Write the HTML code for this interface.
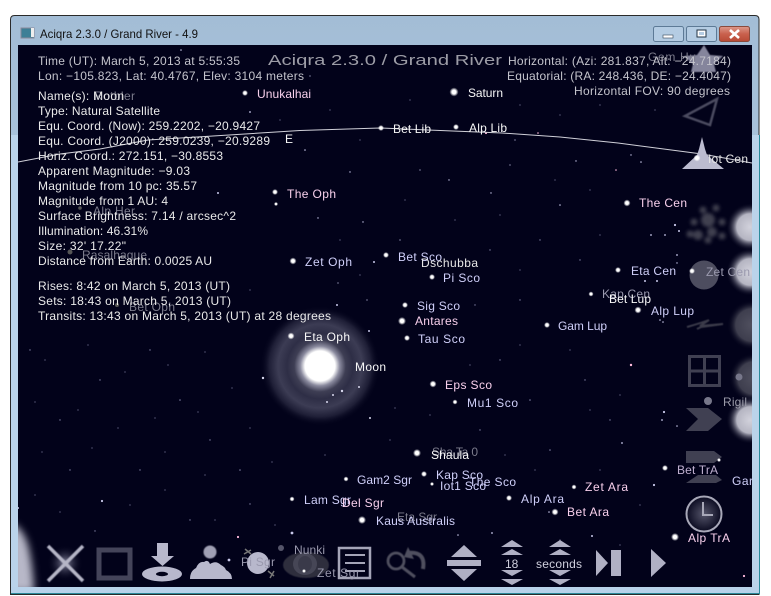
<!DOCTYPE html>
<html><head><meta charset="utf-8"><style>
html,body{margin:0;padding:0;background:#fff;width:771px;height:596px;overflow:hidden}
svg{position:absolute;left:0;top:0;display:block}
text{font-family:"Liberation Sans",sans-serif;font-size:12px;fill:#e6e6e6}
.i text{fill:#eaeaea}
.p{fill:#f8d0ec}.l{fill:#d0d0fa}.w{fill:#f8f8f8}.g{fill:#7c7c8c}.d{fill:#9a99ae}
</style></head><body>
<svg width="771" height="596" viewBox="0 0 771 596" xmlns="http://www.w3.org/2000/svg">
<defs>
<linearGradient id="tb" x1="0" y1="0" x2="0" y2="1"><stop offset="0" stop-color="#a3bdd6"/><stop offset="1" stop-color="#bad3ea"/></linearGradient>
<linearGradient id="cb" x1="0" y1="0" x2="0" y2="1"><stop offset="0" stop-color="#dd9a8c"/><stop offset=".5" stop-color="#c9604d"/><stop offset="1" stop-color="#b84a35"/></linearGradient>
<radialGradient id="halo"><stop offset="0" stop-color="#fff"/><stop offset=".25" stop-color="#fff"/><stop offset=".33" stop-color="#8a8a9e"/><stop offset=".43" stop-color="#3e3e54"/><stop offset=".55" stop-color="#2e2e46"/><stop offset=".7" stop-color="#3c3c54"/><stop offset=".85" stop-color="#1e1e36"/><stop offset="1" stop-color="#02021a" stop-opacity="0"/></radialGradient>
<radialGradient id="blob"><stop offset="0" stop-color="#d2d2dc"/><stop offset=".55" stop-color="#b5b5c2"/><stop offset="1" stop-color="#02021a" stop-opacity="0"/></radialGradient>
<radialGradient id="dblob"><stop offset="0" stop-color="#50505f"/><stop offset=".65" stop-color="#3e3e4e"/><stop offset="1" stop-color="#02021a" stop-opacity="0"/></radialGradient>
<radialGradient id="star"><stop offset="0" stop-color="#fff"/><stop offset=".45" stop-color="#fff"/><stop offset="1" stop-color="#fff" stop-opacity="0"/></radialGradient>
<radialGradient id="clk"><stop offset="0" stop-color="#55556a"/><stop offset="1" stop-color="#0a0a20"/></radialGradient>
<radialGradient id="xg"><stop offset="0" stop-color="#8888a0"/><stop offset="1" stop-color="#02021a" stop-opacity="0"/></radialGradient>
<clipPath id="sky"><rect x="18" y="45" width="734" height="542"/></clipPath>
<filter id="b1" x="-20%" y="-20%" width="140%" height="140%"><feGaussianBlur stdDeviation=".6"/></filter>
<filter id="b2" x="-30%" y="-30%" width="160%" height="160%"><feGaussianBlur stdDeviation="1.800"/></filter>
<filter id="b4" x="-60%" y="-30%" width="220%" height="160%"><feGaussianBlur stdDeviation="4"/></filter>
</defs>

<!-- window frame -->
<path d="M14.500 15.500H755q4 0 4 4V594.500H10.500V19.500q0-4 4-4z" fill="url(#tb)" stroke="#2a2a2a"/>
<rect x="11" y="135" width="7" height="452" fill="#bad3ea"/>
<rect x="752" y="135" width="7" height="452" fill="#bad3ea"/>
<rect x="11" y="587" width="748" height="6" fill="#b8d2ea"/>
<rect x="11" y="593" width="749" height="1" fill="#2a8a9a"/>
<rect x="759" y="135" width="1" height="459" fill="#2a8a9a"/>
<rect x="18" y="45" width="734" height="542" fill="#02021a"/>

<!-- title bar -->
<rect x="21" y="28" width="13" height="10" fill="#3d7f96" stroke="#889"/>
<rect x="31" y="28" width="3" height="9" fill="#eee"/>
<text x="40" y="38" style="font-size:12px;fill:#111" textLength="158" lengthAdjust="spacingAndGlyphs">Aciqra 2.3.0 / Grand River - 4.9</text>
<rect x="653.500" y="26.500" width="30" height="15" rx="2" fill="#b4cce3" stroke="#5d7a96"/>
<rect x="663" y="35" width="10" height="3" fill="#fff" stroke="#345" stroke-width=".6"/>
<rect x="686.500" y="26.500" width="30" height="15" rx="2" fill="#b4cce3" stroke="#5d7a96"/>
<rect x="697" y="30" width="9" height="7" fill="#fff" stroke="#234" stroke-width="1"/><rect x="699" y="32" width="5" height="3" fill="#b4cce3"/>
<rect x="719.500" y="26.500" width="30" height="15" rx="2" fill="url(#cb)" stroke="#8a4a3c"/>
<path d="M730 30l9 8M739 30l-9 8" stroke="#fff" stroke-width="2.600"/>

<g clip-path="url(#sky)">
<!-- faint stars -->
<g fill="#c8c8ea">
<circle cx="181" cy="50" r=".8"/><circle cx="213" cy="72" r=".6"/><circle cx="310" cy="76" r=".6"/><circle cx="250" cy="112" r=".9"/><circle cx="305" cy="150" r=".8"/><circle cx="218" cy="193" r="1"/><circle cx="318" cy="218" r=".7"/><circle cx="363" cy="222" r=".7"/><circle cx="350" cy="172" r=".7"/><circle cx="374" cy="262" r="1"/><circle cx="338" cy="283" r=".6"/><circle cx="367" cy="300" r=".6"/><circle cx="400" cy="240" r=".6"/><circle cx="486" cy="133" r="1.100" fill="#fbd"/><circle cx="538" cy="133" r=".8" fill="#fbd"/><circle cx="576" cy="161" r=".7"/><circle cx="631" cy="155" r=".7"/><circle cx="641" cy="162" r=".8"/><circle cx="616" cy="170" r=".8" fill="#fbd"/><circle cx="449" cy="180" r=".7"/><circle cx="491" cy="193" r=".7"/><circle cx="420" cy="170" r=".6"/><circle cx="515" cy="140" r=".6"/><circle cx="510" cy="165" r=".6"/><circle cx="560" cy="205" r=".8"/><circle cx="675" cy="225" r="1.100"/><circle cx="679" cy="231" r="1"/><circle cx="651" cy="235" r=".9"/><circle cx="665" cy="235" r=".9"/><circle cx="677" cy="255" r=".9"/><circle cx="677" cy="263" r=".7"/><circle cx="657" cy="281" r="1"/><circle cx="645" cy="281" r="1"/><circle cx="660" cy="320" r=".8"/><circle cx="663" cy="322" r=".8"/><circle cx="631" cy="365" r="1.200" fill="#fbd"/><circle cx="664" cy="412" r="1.100"/><circle cx="662" cy="420" r=".9"/><circle cx="677" cy="426" r=".8"/><circle cx="622" cy="443" r=".9"/><circle cx="654" cy="485" r="1.100"/><circle cx="549" cy="512" r=".8"/><circle cx="592" cy="536" r="1"/><circle cx="492" cy="533" r=".9"/><circle cx="458" cy="535" r=".8"/><circle cx="292" cy="533" r="1.400"/><circle cx="238" cy="537" r="1.100" fill="#fbd"/><circle cx="229" cy="560" r="1.400"/><circle cx="102" cy="501" r="1.100"/><circle cx="18" cy="508" r="1"/><circle cx="744" cy="576" r="1.100" fill="#fbd"/>
<circle cx="337" cy="305" r="1"/><circle cx="369" cy="331" r="1"/><circle cx="316" cy="344" r="1"/>
</g>
<g fill="#7e7ea0">
<circle cx="250" cy="504" r=".7"/><circle cx="190" cy="520" r=".7"/><circle cx="95" cy="531" r=".7"/><circle cx="140" cy="470" r=".7"/><circle cx="60" cy="420" r=".7"/><circle cx="180" cy="400" r=".8"/><circle cx="100" cy="380" r=".7"/><circle cx="210" cy="440" r=".7"/><circle cx="240" cy="470" r=".8"/><circle cx="30" cy="350" r=".7"/><circle cx="70" cy="470" r=".7"/><circle cx="150" cy="350" r=".7"/><circle cx="500" cy="360" r=".7"/><circle cx="530" cy="400" r=".8"/><circle cx="585" cy="380" r=".7"/><circle cx="610" cy="420" r=".7"/><circle cx="480" cy="430" r=".7"/><circle cx="550" cy="450" r=".8"/><circle cx="520" cy="300" r=".7"/><circle cx="490" cy="250" r=".7"/><circle cx="580" cy="260" r=".7"/><circle cx="540" cy="240" r=".7"/><circle cx="475" cy="305" r=".7"/>
<circle cx="45" cy="360" r=".6"/><circle cx="88" cy="345" r=".6"/><circle cx="125" cy="372" r=".6"/><circle cx="168" cy="365" r=".6"/><circle cx="205" cy="352" r=".6"/><circle cx="232" cy="388" r=".6"/><circle cx="35" cy="402" r=".6"/><circle cx="78" cy="410" r=".6"/><circle cx="118" cy="428" r=".6"/><circle cx="155" cy="418" r=".6"/><circle cx="198" cy="412" r=".6"/><circle cx="250" cy="428" r=".6"/><circle cx="42" cy="452" r=".6"/><circle cx="92" cy="448" r=".6"/><circle cx="165" cy="452" r=".6"/><circle cx="205" cy="475" r=".6"/><circle cx="272" cy="462" r=".6"/><circle cx="35" cy="495" r=".6"/><circle cx="60" cy="512" r=".6"/><circle cx="130" cy="505" r=".6"/><circle cx="165" cy="490" r=".6"/><circle cx="215" cy="520" r=".6"/><circle cx="275" cy="525" r=".6"/><circle cx="325" cy="455" r=".6"/><circle cx="390" cy="440" r=".6"/><circle cx="395" cy="408" r=".6"/><circle cx="505" cy="455" r=".6"/><circle cx="535" cy="470" r=".6"/><circle cx="600" cy="470" r=".6"/><circle cx="640" cy="505" r=".6"/><circle cx="600" cy="515" r=".6"/><circle cx="560" cy="540" r=".6"/><circle cx="620" cy="545" r=".6"/><circle cx="430" cy="415" r=".6"/><circle cx="470" cy="365" r=".6"/><circle cx="520" cy="345" r=".6"/><circle cx="570" cy="350" r=".6"/><circle cx="600" cy="330" r=".6"/><circle cx="620" cy="395" r=".6"/><circle cx="590" cy="410" r=".6"/><circle cx="500" cy="215" r=".6"/><circle cx="455" cy="220" r=".6"/><circle cx="520" cy="270" r=".6"/><circle cx="555" cy="180" r=".6"/><circle cx="590" cy="190" r=".6"/><circle cx="600" cy="235" r=".6"/><circle cx="405" cy="200" r=".6"/><circle cx="360" cy="140" r=".6"/><circle cx="410" cy="100" r=".6"/><circle cx="520" cy="105" r=".6"/><circle cx="560" cy="115" r=".6"/><circle cx="600" cy="105" r=".6"/><circle cx="655" cy="110" r=".6"/><circle cx="330" cy="110" r=".6"/><circle cx="280" cy="120" r=".6"/><circle cx="340" cy="240" r=".6"/><circle cx="250" cy="290" r=".6"/><circle cx="360" cy="275" r=".6"/>
</g>
<circle cx="80" cy="208" r="1.800" fill="#555"/><circle cx="70" cy="252" r="2.500" fill="#555"/><circle cx="117" cy="305" r="2" fill="#555"/>

<!-- ecliptic -->
<polyline points="18,162 60,154 100,149 148,140 213,136 300,130.500 380,128 428,130 502,133 560,137 618,143 702,154 752,163" fill="none" stroke="#d0d0d8" stroke-width="1"/>

<!-- moon -->
<circle cx="320" cy="366" r="60" fill="url(#halo)"/>
<g fill="#d8d8ee"><circle cx="342" cy="391" r="1.200"/><circle cx="333" cy="395" r="1"/><circle cx="359" cy="387" r="1"/><circle cx="263" cy="378" r="1.200"/><circle cx="327" cy="402" r="1"/><circle cx="370" cy="418" r="1"/></g>

<!-- edge blobs -->
<path d="M10 523Q22 526 28 545Q33 565 34 592H10z" fill="#b8b8c8" filter="url(#b4)"/>
<circle cx="750" cy="227" r="24" fill="url(#blob)"/><circle cx="750" cy="272" r="24" fill="url(#blob)"/><circle cx="752" cy="325" r="25" fill="url(#dblob)"/><circle cx="754" cy="378" r="25" fill="url(#dblob)"/><circle cx="750" cy="420" r="24" fill="url(#blob)"/>

<!-- right icons -->
<path d="M704 45l6 10 13 1-9 8 2 8H691l2-8-9-8 13-1z" fill="#85859c" filter="url(#b1)"/>
<path d="M717 99l-7 26-25-9z" fill="none" stroke="#4c4c60" stroke-width="2.500" filter="url(#b1)"/>
<path d="M702 137l3 12 2 6 17 14H682l15-14 2-6z" fill="#bcbcd0"/>
<g fill="#3f3f50" filter="url(#b2)"><circle cx="708" cy="220" r="7"/><circle cx="694" cy="222" r="3.500"/><circle cx="722" cy="222" r="3.500"/><circle cx="698" cy="235" r="5"/><circle cx="712" cy="232" r="5"/><circle cx="703" cy="210" r="3.500"/><circle cx="716" cy="208" r="3.500"/><circle cx="722" cy="236" r="3.500"/><circle cx="690" cy="234" r="3.500"/><circle cx="708" cy="240" r="3.500"/></g>
<circle cx="704" cy="275" r="14.500" fill="#4d4d5f"/>
<path d="M687 327q14-4 22-7l-9 6 23-2-22 3-4 2" fill="none" stroke="#3a3a4a" stroke-width="2" filter="url(#b1)"/>
<rect x="689.500" y="356.500" width="30" height="29" fill="none" stroke="#404052" stroke-width="3"/><path d="M704.500 356v30M689 371h31" stroke="#404052" stroke-width="3"/>
<path d="M686 408h22l14 11-14 12H686l12-12z" fill="#404052"/>
<path d="M686 451h28l8 6-8 6H686zM686 483l12-8h18l6 5-6 3H686z" fill="#404052"/>
<circle cx="704" cy="514" r="17.500" fill="url(#clk)" stroke="#a8a8b8" stroke-width="2"/><path d="M703 502v13h10" fill="none" stroke="#a8a8b8" stroke-width="2"/>

<!-- bottom icons -->
<circle cx="65" cy="563" r="18" fill="url(#xg)"/><path d="M48 546L83 581M83 546L48 581" stroke="#b5b5c6" stroke-width="3.500" filter="url(#b1)"/>
<rect x="99" y="550" width="31" height="28" fill="none" stroke="#44445a" stroke-width="5"/>
<path d="M157 543h11v13h6l-11.500 10-11.500-10h6z" fill="#b8b8cc"/><ellipse cx="162" cy="574" rx="20" ry="7.500" fill="#b8b8cc"/><ellipse cx="162" cy="574" rx="6" ry="2.200" fill="#02021a"/>
<circle cx="210" cy="552" r="6.500" fill="#a0a0b4" filter="url(#b1)"/><path d="M190 579q0-8 6-11 3-7 8-6 4-3 6 2 6-4 11 1 4 2 5 5 6 3 6 9z" fill="#b8b8cc"/>
<circle cx="258" cy="563" r="11" fill="#b8b8cc"/>
<path d="M245 549l6 5M244 554l7-4M268 571l6 5M270 578l4-7" stroke="#777" stroke-width="1.500"/>
<ellipse cx="306" cy="565" rx="23" ry="13" fill="#2e2e3e" filter="url(#b1)"/><ellipse cx="305" cy="564" rx="12" ry="11" fill="#464656"/><ellipse cx="305" cy="564" rx="7" ry="8" fill="#3a3a4a"/>
<rect x="339" y="548" width="31" height="30" fill="none" stroke="#a5a5b8" stroke-width="2.500"/><path d="M345 555h20M345 563h20M345 571h20" stroke="#a5a5b8" stroke-width="2"/>
<g filter="url(#b1)"><circle cx="396" cy="561" r="8" fill="none" stroke="#50505f" stroke-width="2.800"/><path d="M402 567l13 10" stroke="#50505f" stroke-width="3"/><path d="M408 553q18-2 15 16" fill="none" stroke="#50505f" stroke-width="4"/><path d="M408 547l6 12-10-2z" fill="#50505f"/></g>
<path d="M464 545l13 12h-26zM464 581l-13-12h26z" fill="#b0b0c4"/><rect x="447" y="560" width="34" height="6" fill="#b0b0c4"/>
<g fill="#b0b0c4">
<path d="M512 540l11 7h-22zM512 549l11 6h-22zM512 585l11-6h-22zM501 570h22l-11 6z"/>
<path d="M560 540l11 7h-22zM560 549l11 6h-22zM560 585l11-6h-22zM549 570h22l-11 6z"/>
<path d="M596 550l12 13-12 13z"/><rect x="611" y="550" width="10" height="26"/>
<path d="M651 549l15 14-15 14z"/>
</g>

<!-- bright stars -->
<g fill="url(#star)">
<circle cx="245" cy="93" r="3"/><circle cx="454" cy="92" r="4.500"/><circle cx="381" cy="128" r="3"/><circle cx="456" cy="127" r="3"/><circle cx="697" cy="158" r="3.500"/><circle cx="627" cy="203" r="3.500"/><circle cx="275" cy="192" r="3"/><circle cx="276" cy="204" r="2"/><circle cx="293" cy="261" r="3.500"/><circle cx="386" cy="255" r="3"/><circle cx="432" cy="277" r="3"/><circle cx="405" cy="305" r="3"/><circle cx="402" cy="321" r="4"/><circle cx="407" cy="338" r="3"/><circle cx="291" cy="336" r="3.500"/><circle cx="433" cy="384" r="3.500"/><circle cx="455" cy="402" r="2.500"/><circle cx="547" cy="325" r="3"/><circle cx="618" cy="270" r="3"/><circle cx="591" cy="294" r="2.500"/><circle cx="638" cy="310" r="3.500"/><circle cx="665" cy="468" r="3"/><circle cx="417" cy="453" r="4"/><circle cx="424" cy="474" r="3"/><circle cx="432" cy="484" r="2"/><circle cx="346" cy="479" r="2.500"/><circle cx="292" cy="499" r="2.500"/><circle cx="362" cy="520" r="4"/><circle cx="509" cy="498" r="3"/><circle cx="574" cy="487" r="2.500"/><circle cx="555" cy="512" r="3.500"/><circle cx="675" cy="537" r="4"/><circle cx="304" cy="571" r="2"/><circle cx="692" cy="271" r="3"/><circle cx="719" cy="460" r="2"/>
</g>
<circle cx="708" cy="401" r="4" fill="#77778a"/><circle cx="739" cy="377" r="3.500" fill="#77778a"/><circle cx="281" cy="548" r="3" fill="#55556a"/>
</g>

<!-- faded labels -->
<text x="94" y="100" class="g" textLength="41">Rotbler</text>
<text x="93" y="215" class="g" textLength="42">Alp Her</text>
<text x="82" y="259" class="g" textLength="65">Rasalhague</text>
<text x="129" y="311" class="g" textLength="46">Bet Oph</text>
<text x="648" y="61" class="g" textLength="48">Gem Hu</text>
<text x="602" y="298" class="d" textLength="48">Kap Cen</text>
<text x="397" y="521" class="g" textLength="40">Eta Sgr</text>
<text x="432" y="456" class="g" textLength="46">Sha Ta 0</text>
<text x="294" y="554" class="d" textLength="31">Nunki</text>
<text x="241" y="566" class="d" textLength="34">Pi Sgr</text>
<text x="317" y="577" class="d" textLength="43">Zet Sgr</text>
<text x="706" y="276" class="d" textLength="44">Zet Cen</text>
<text x="723" y="406" class="d" style="fill:#9a9aa8" textLength="24">Rigil</text>
<text x="677" y="474" class="d" style="fill:#c0b0d0" textLength="41">Bet TrA</text>

<!-- labels -->
<text x="257" y="98" class="p" textLength="54">Unukalhai</text>
<text x="468" y="97" class="w" textLength="35">Saturn</text>
<text x="393" y="133" class="w" textLength="38">Bet Lib</text>
<text x="469" y="132" class="w" textLength="38">Alp Lib</text>
<text x="708" y="163" textLength="40">Iot Cen</text>
<text x="639" y="207" class="p" textLength="48">The Cen</text>
<text x="287" y="198" class="p" textLength="49">The Oph</text>
<text x="305" y="266" class="l" textLength="47">Zet Oph</text>
<text x="398" y="261" class="l" textLength="44">Bet Sco</text>
<text x="421" y="267" textLength="57">Dschubba</text>
<text x="443" y="282" class="l" textLength="37">Pi Sco</text>
<text x="417" y="310" class="l" textLength="43">Sig Sco</text>
<text x="415" y="325" class="p" textLength="43">Antares</text>
<text x="418" y="343" class="l" textLength="47">Tau Sco</text>
<text x="304" y="341" class="w" textLength="46">Eta Oph</text>
<text x="355" y="371" class="w" textLength="31">Moon</text>
<text x="445" y="389" class="p" textLength="47">Eps Sco</text>
<text x="467" y="407" class="l" textLength="51">Mu1 Sco</text>
<text x="558" y="330" class="l" textLength="49">Gam Lup</text>
<text x="631" y="275" class="l" textLength="45">Eta Cen</text>
<text x="609" y="303" class="w" textLength="42">Bet Lup</text>
<text x="651" y="315" class="l" textLength="43">Alp Lup</text>
<text x="431" y="459" class="w" textLength="38">Shaula</text>
<text x="436" y="479" class="l" textLength="47">Kap Sco</text>
<text x="440" y="490" class="l" textLength="46">Iot1 Sco</text>
<text x="469" y="486" class="l" textLength="47">The Sco</text>
<text x="521" y="503" class="l" textLength="43">Alp Ara</text>
<text x="585" y="491" class="p" textLength="43">Zet Ara</text>
<text x="567" y="516" class="p" textLength="42">Bet Ara</text>
<text x="357" y="484" class="l" textLength="55">Gam2 Sgr</text>
<text x="304" y="504" class="l" textLength="47">Lam Sgr</text>
<text x="342" y="507" class="p" textLength="42">Del Sgr</text>
<text x="376" y="525" class="l" textLength="79">Kaus Australis</text>
<text x="732" y="485" class="l" textLength="21">Gar</text>
<text x="688" y="542" class="p" textLength="42">Alp TrA</text>
<text x="285" y="143" class="w">E</text>
<text x="505" y="568" style="fill:#d0d0de">18</text>
<text x="536" y="568" style="fill:#d0d0de" textLength="46">seconds</text>

<!-- info -->
<g class="i">
<text x="38" y="65" style="fill:#c4c4cc" textLength="202">Time (UT): March 5, 2013 at 5:55:35</text>
<text x="38" y="80" style="fill:#c4c4cc" textLength="266">Lon: −105.823, Lat: 40.4767, Elev: 3104 meters</text>
<text x="38" y="100" textLength="86">Name(s): Moon</text>
<text x="38" y="115" textLength="122">Type: Natural Satellite</text>
<text x="38" y="130" textLength="222">Equ. Coord. (Now): 259.2202, −20.9427</text>
<text x="38" y="145" textLength="232">Equ. Coord. (J2000): 259.0239, −20.9289</text>
<text x="38" y="160" textLength="185">Horiz. Coord.: 272.151, −30.8553</text>
<text x="38" y="175" textLength="152">Apparent Magnitude: −9.03</text>
<text x="38" y="190" textLength="159">Magnitude from 10 pc: 35.57</text>
<text x="38" y="205" textLength="130">Magnitude from 1 AU: 4</text>
<text x="38" y="220" textLength="198">Surface Brightness: 7.14 / arcsec^2</text>
<text x="38" y="235" textLength="110">Illumination: 46.31%</text>
<text x="38" y="250" textLength="88">Size: 32' 17.22"</text>
<text x="38" y="265" textLength="174">Distance from Earth: 0.0025 AU</text>
<text x="38" y="290" textLength="192">Rises: 8:42 on March 5, 2013 (UT)</text>
<text x="38" y="305" textLength="193">Sets: 18:43 on March 5, 2013 (UT)</text>
<text x="38" y="320" textLength="293">Transits: 13:43 on March 5, 2013 (UT) at 28 degrees</text>
<text x="268" y="65" style="font-size:15px;fill:#9c9ca6" textLength="234" lengthAdjust="spacingAndGlyphs">Aciqra 2.3.0 / Grand River</text>
<text x="508" y="65" style="fill:#c4c4cc" textLength="223">Horizontal: (Azi: 281.837, Alt: −24.7184)</text>
<text x="507" y="80" style="fill:#c4c4cc" textLength="224">Equatorial: (RA: 248.436, DE: −24.4047)</text>
<text x="574" y="95" style="fill:#c4c4cc" textLength="156">Horizontal FOV: 90 degrees</text>
</g>
</svg>
</body></html>
